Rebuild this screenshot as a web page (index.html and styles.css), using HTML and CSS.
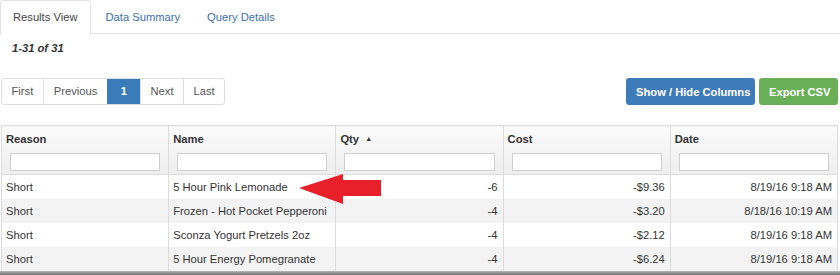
FILE: index.html
```html
<!DOCTYPE html>
<html lang="en">
<head>
    <meta charset="UTF-8">
    <title>Results View</title>
    <link rel="stylesheet" href="styles.css">
</head>
<body>
    <ul class="tabs">
        <li class="tab active">Results View</li>
        <li class="tab">Data Summary</li>
        <li class="tab">Query Details</li>
    </ul>

    <div class="count">1-31 of 31</div>

    <div class="toolbar">
        <div class="pager">
            <span class="page">First</span>
            <span class="page wide">Previous</span>
            <span class="page current">1</span>
            <span class="page">Next</span>
            <span class="page">Last</span>
        </div>
        <div class="actions">
            <button class="btn btn-blue">Show / Hide Columns</button>
            <button class="btn btn-green">Export CSV</button>
        </div>
    </div>

    <div class="grid-wrap">
        <table class="grid">
            <thead>
                <tr>
                    <th><div class="label">Reason</div><input type="text"></th>
                    <th><div class="label">Name</div><input type="text"></th>
                    <th><div class="label">Qty <span class="sort">&#9650;</span></div><input type="text"></th>
                    <th><div class="label">Cost</div><input type="text"></th>
                    <th><div class="label">Date</div><input type="text"></th>
                </tr>
            </thead>
            <tbody>
                <tr>
                    <td>Short</td>
                    <td>5 Hour Pink Lemonade</td>
                    <td class="num">-6</td>
                    <td class="num">-$9.36</td>
                    <td class="num">8/19/16 9:18 AM</td>
                </tr>
                <tr>
                    <td>Short</td>
                    <td>Frozen - Hot Pocket Pepperoni</td>
                    <td class="num">-4</td>
                    <td class="num">-$3.20</td>
                    <td class="num">8/18/16 10:19 AM</td>
                </tr>
                <tr>
                    <td>Short</td>
                    <td>Sconza Yogurt Pretzels 2oz</td>
                    <td class="num">-4</td>
                    <td class="num">-$2.12</td>
                    <td class="num">8/19/16 9:18 AM</td>
                </tr>
                <tr>
                    <td>Short</td>
                    <td>5 Hour Energy Pomegranate</td>
                    <td class="num">-4</td>
                    <td class="num">-$6.24</td>
                    <td class="num">8/19/16 9:18 AM</td>
                </tr>
            </tbody>
        </table>

        <!-- red callout arrow pointing at the first row -->
        <svg class="callout" width="84" height="30" viewBox="0 0 84 30">
            <polygon points="0,14 44,0 44,6 82,6 82,22 44,22 44,30" fill="#e8202a"/>
        </svg>
    </div>

    <div class="edge"></div>
</body>
</html>
```

FILE: styles.css
```css
body {
    margin: 0;
    font-family: "Liberation Sans", Arial, sans-serif;
    font-size: 11.2px;
    color: #333;
    background: #fff;
    width: 840px;
    height: 275px;
    overflow: hidden;
    position: relative;
}

.tabs {
    list-style: none;
    margin: 0;
    padding: 0;
    display: flex;
    border-bottom: 1px solid #e3e3e3;
    height: 33px;
}
.tab {
    padding: 0 13px 0 12px;
    line-height: 33px;
    color: #3a6fb0;
    border: 1px solid transparent;
    border-bottom: none;
}
.tab.active {
    color: #444;
    background: #fff;
    border-color: #e3e3e3;
    border-radius: 3px 3px 0 0;
    height: 34px;
    margin-right: 1px;
}

.count {
    font-weight: bold;
    font-style: italic;
    padding: 7px 0 0 12px;
    height: 37px;
    line-height: 14px;
}

.toolbar {
    display: flex;
    justify-content: space-between;
    padding: 0 2px 0 1px;
    height: 27px;
}
.pager {
    display: flex;
    border: 1px solid #ddd;
    border-radius: 3px;
    height: 25px;
}
.page {
    line-height: 25px;
    padding: 0 9.5px;
    border-left: 1px solid #ddd;
    color: #555;
}
.page:first-child {
    border-left: none;
}
.page.wide {
    padding: 0 10px;
}
.page.current {
    background: #3a7cba;
    border-color: #3a7cba;
    color: #fff;
    font-weight: bold;
    padding: 0 13px 0 12.5px;
}

.actions {
    display: flex;
    gap: 4px;
}
.btn {
    font-family: inherit;
    font-size: 11.2px;
    font-weight: bold;
    color: #fff;
    border: none;
    border-radius: 3px;
    height: 27px;
    padding: 0 10px;
    white-space: nowrap;
}
.btn-blue {
    background: #3f7bbb;
    width: 129px;
}
.btn-green {
    background: #6aaf58;
    width: 79px;
}

.grid-wrap {
    position: relative;
    margin: 20px 2px 0 1px;
}
.grid {
    width: 837px;
    border-collapse: collapse;
    table-layout: fixed;
}
.grid th {
    text-align: left;
    vertical-align: top;
    height: 48px;
    padding: 0 8px;
    border: 1px solid #dcdcdc;
    background: linear-gradient(#fbfbfb, #eeeeee);
}
.grid th .label {
    padding-top: 6px;
    margin-left: -4px;
    height: 21px;
    line-height: 14px;
}
.sort {
    font-size: 7px;
    vertical-align: 2px;
    margin-left: 3px;
}
.grid input {
    display: block;
    box-sizing: border-box;
    width: 100%;
    height: 18px;
    border: 1px solid #cfcfcf;
    margin: 0;
    padding: 0;
}
.grid td {
    height: 24px;
    padding: 0 5px 0 4px;
    border-left: 1px solid #dcdcdc;
    border-right: 1px solid #dcdcdc;
    white-space: nowrap;
    line-height: 24px;
}
.grid tbody tr:nth-child(even) td {
    background: #f3f3f3;
}
.grid td.num {
    text-align: right;
}

.callout {
    position: absolute;
    left: 298px;
    top: 49px;
}

.edge {
    position: absolute;
    left: 0;
    right: 0;
    bottom: 0;
    height: 4px;
    background: linear-gradient(#b8b8b8, #6f6f6f);
}
```
